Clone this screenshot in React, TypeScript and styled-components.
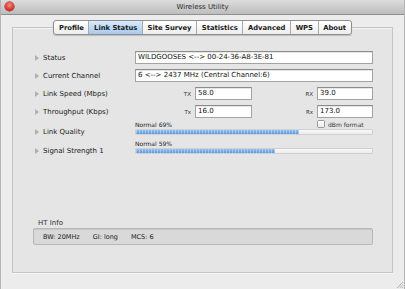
import styled, { createGlobalStyle } from "styled-components";

const GlobalStyle = createGlobalStyle`
  html, body {
    margin: 0;
    padding: 0;
    background: #ececec;
  }
  body {
    font-family: "DejaVu Sans", "Liberation Sans", sans-serif;
    color: #1e1e1e;
  }
`;

const Window = styled.div`
  width: 405px;
  height: 289px;
  box-sizing: border-box;
  display: flex;
  flex-direction: column;
  background: #ececec;
  border-left: 1px solid #b4b4b4;
  border-right: 1px solid #b4b4b4;
  position: relative;
  overflow: hidden;
`;

const TitleBar = styled.div`
  height: 14px;
  flex: none;
  display: flex;
  align-items: center;
  justify-content: center;
  background: linear-gradient(#dcdcdc, #bdbdbd);
  border-bottom: 1px solid #8f8f8f;
  font-size: 7px;
  color: #2a2a2a;
  position: relative;
`;

const CloseButton = styled.span`
  position: absolute;
  left: 4px;
  top: 2px;
  width: 9px;
  height: 9px;
  border-radius: 50%;
  background: radial-gradient(circle at 50% 35%, #ff8a80, #d8352a 60%, #9e1c14);
  box-shadow: 0 0 0 0.5px #7a1a14;
`;

const Body = styled.div`
  flex: 1;
  display: flex;
  flex-direction: column;
  padding: 5px 11px 0 11px;
`;

const TabBar = styled.div`
  align-self: center;
  display: flex;
  height: 13px;
  border: 1px solid #8e8e8e;
  border-radius: 3px;
  background: linear-gradient(#ffffff, #ededed);
  box-shadow: 0 1px 1px rgba(0, 0, 0, 0.18);
  overflow: hidden;
  position: relative;
  z-index: 1;
`;

const Tab = styled.div<{ $active?: boolean }>`
  display: flex;
  align-items: center;
  padding: 0 4.6px;
  font-size: 6.8px;
  font-weight: bold;
  color: #1a1a1a;
  border-right: 1px solid #a9a9a9;
  background: ${(p) =>
    p.$active ? "linear-gradient(#d9eafb, #a7caf0)" : "transparent"};
  &:last-child {
    border-right: none;
  }
`;

const GroupBox = styled.div`
  margin-top: -8px;
  height: 246px;
  box-sizing: border-box;
  border: 1px solid #c4c4c4;
  box-shadow: 0 1px 0 #f8f8f8, inset 0 1px 0 #f4f4f4;
  background: #e5e5e5;
  display: flex;
  flex-direction: column;
  padding: 23px 19px 27px 22px;
`;

const Rows = styled.div`
  display: flex;
  flex-direction: column;
  gap: 5px;
`;

const Row = styled.div`
  display: grid;
  grid-template-columns: 100px 1fr;
  align-items: center;
`;

const Label = styled.div`
  display: flex;
  align-items: center;
  gap: 4px;
  font-size: 7px;
  color: #222;
`;

const Arrow = styled.span`
  width: 0;
  height: 0;
  border-top: 3px solid transparent;
  border-bottom: 3px solid transparent;
  border-left: 4px solid #b0b0b0;
`;

const Field = styled.div`
  height: 13px;
  box-sizing: border-box;
  background: #fff;
  border: 1px solid #a3a3a3;
  border-top-color: #8c8c8c;
  box-shadow: inset 0 1px 0 #e6e6e6;
  font-size: 7px;
  line-height: 11px;
  padding-left: 2px;
  color: #111;
  white-space: nowrap;
`;

const PairGrid = styled.div`
  display: grid;
  grid-template-columns: 60px 57px 1fr 56px;
  align-items: center;
`;

const PairLabel = styled.span`
  text-align: right;
  padding-right: 4px;
  font-size: 5.5px;
  color: #333;
`;

const Meters = styled.div`
  display: flex;
  flex-direction: column;
  gap: 4px;
  margin-top: 2px;
`;

const MeterRow = styled.div`
  display: grid;
  grid-template-columns: 100px 1fr;
  align-items: end;
`;

const MeterLabel = styled(Label)`
  margin-bottom: -1px;
`;

const Meter = styled.div`
  display: flex;
  flex-direction: column;
  gap: 1px;
`;

const MeterHead = styled.div`
  display: flex;
  justify-content: space-between;
  align-items: center;
  font-size: 6px;
  color: #222;
  height: 8px;
`;

const Check = styled.label`
  display: flex;
  align-items: center;
  gap: 3px;
  width: 56px;
  font-size: 6px;
  color: #333;
`;

const CheckBox = styled.span`
  width: 6px;
  height: 6px;
  border: 1px solid #999;
  border-radius: 1.5px;
  background: linear-gradient(#ffffff, #eaeaea);
`;

const Track = styled.div`
  height: 6px;
  box-sizing: border-box;
  background: linear-gradient(#f8f8f8, #ececec);
  border: 1px solid #d0d0d0;
  border-radius: 1px;
  overflow: hidden;
`;

const Fill = styled.div`
  height: 100%;
  background: repeating-linear-gradient(
      90deg,
      rgba(255, 255, 255, 0.3) 0 1px,
      transparent 1px 3px
    ),
    linear-gradient(#93c0f3, #5b98e0);
`;

const HtSection = styled.div`
  margin-top: auto;
  margin-left: -2px;
  display: flex;
  flex-direction: column;
  gap: 1px;
`;

const HtTitle = styled.div`
  font-size: 7px;
  color: #333;
  padding-left: 5px;
`;

const HtBox = styled.div`
  height: 17px;
  box-sizing: border-box;
  display: flex;
  align-items: center;
  gap: 13px;
  padding-left: 9px;
  background: #d9d9d9;
  border: 1px solid #b9b9b9;
  border-radius: 2px;
  box-shadow: inset 0 1px 1px rgba(0, 0, 0, 0.08);
  font-size: 6.5px;
  color: #222;
`;

const Grip = styled.svg`
  position: absolute;
  right: 1px;
  bottom: 1px;
`;

const tabs = ["Profile", "Link Status", "Site Survey", "Statistics", "Advanced", "WPS", "About"];

const meters = [
  { label: "Link Quality", value: 69, check: true },
  { label: "Signal Strength 1", value: 59, check: false },
];

export default function App() {
  return (
    <Window>
      <GlobalStyle />
      <TitleBar>
        <CloseButton />
        Wireless Utility
      </TitleBar>
      <Body>
        <TabBar>
          {tabs.map((t) => (
            <Tab key={t} $active={t === "Link Status"}>
              {t}
            </Tab>
          ))}
        </TabBar>
        <GroupBox>
          <Rows>
            <Row>
              <Label>
                <Arrow />
                Status
              </Label>
              <Field>WILDGOOSES &lt;--&gt; 00-24-36-A8-3E-81</Field>
            </Row>
            <Row>
              <Label>
                <Arrow />
                Current Channel
              </Label>
              <Field>6 &lt;--&gt; 2437 MHz (Central Channel:6)</Field>
            </Row>
            <Row>
              <Label>
                <Arrow />
                Link Speed (Mbps)
              </Label>
              <PairGrid>
                <PairLabel>TX</PairLabel>
                <Field>58.0</Field>
                <PairLabel>RX</PairLabel>
                <Field>39.0</Field>
              </PairGrid>
            </Row>
            <Row>
              <Label>
                <Arrow />
                Throughput (Kbps)
              </Label>
              <PairGrid>
                <PairLabel>Tx</PairLabel>
                <Field>16.0</Field>
                <PairLabel>Rx</PairLabel>
                <Field>173.0</Field>
              </PairGrid>
            </Row>
          </Rows>
          <Meters>
            {meters.map((m) => (
              <MeterRow key={m.label}>
                <MeterLabel>
                  <Arrow />
                  {m.label}
                </MeterLabel>
                <Meter>
                  <MeterHead>
                    <span>Normal {m.value}%</span>
                    {m.check && (
                      <Check>
                        <CheckBox />
                        dBm format
                      </Check>
                    )}
                  </MeterHead>
                  <Track>
                    <Fill style={{ width: `${m.value}%` }} />
                  </Track>
                </Meter>
              </MeterRow>
            ))}
          </Meters>
          <HtSection>
            <HtTitle>HT Info</HtTitle>
            <HtBox>
              <span>BW: 20MHz</span>
              <span>GI: long</span>
              <span>MCS: 6</span>
            </HtBox>
          </HtSection>
        </GroupBox>
      </Body>
      <Grip width="7" height="7" viewBox="0 0 7 7">
        <path d="M1 7 L7 1 M3.5 7 L7 3.5 M6 7 L7 6" stroke="#a8a8a8" strokeWidth="0.8" />
      </Grip>
    </Window>
  );
}
